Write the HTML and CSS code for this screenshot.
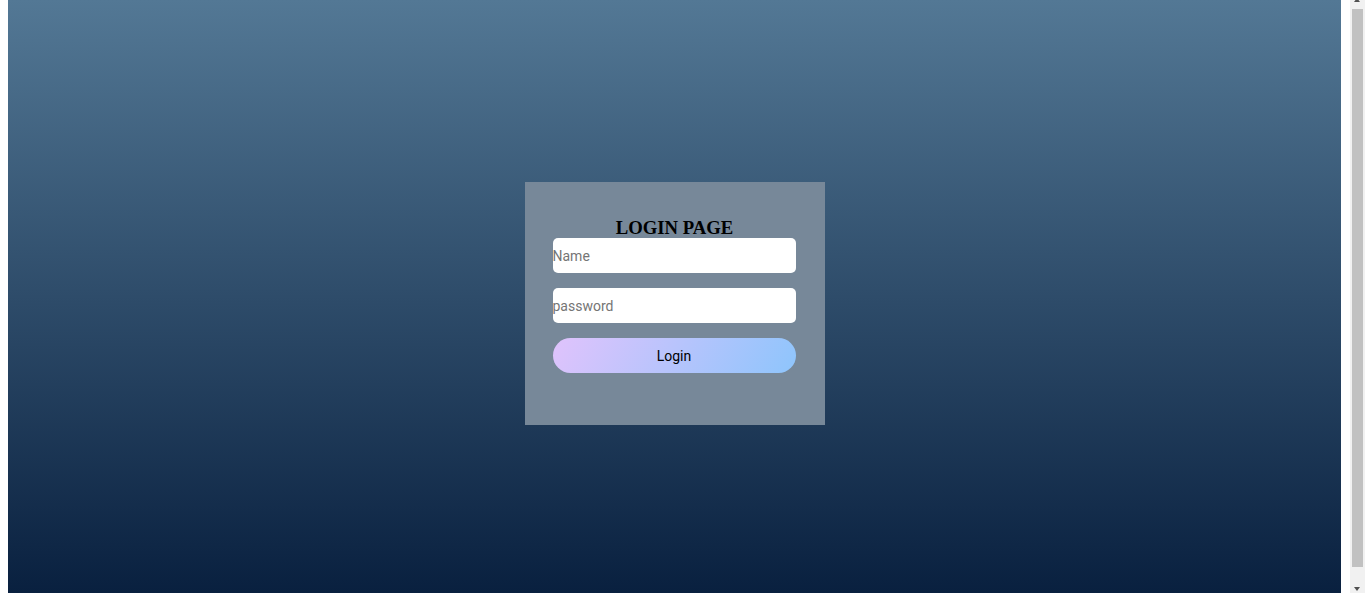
FILE: index.html
```html
<!DOCTYPE html>
<html lang="en">
<head>
<meta charset="utf-8">
<title>Login Page</title>
<link rel="stylesheet" href="styles.css">
</head>
<body>
<div class="page">
  <form class="card">
    <h3 class="title">LOGIN PAGE</h3>
    <input class="field" type="text" placeholder="Name">
    <input class="field" type="password" placeholder="password">
    <button class="btn" type="button">Login</button>
  </form>
</div>
<div class="scrollbar" aria-hidden="true">
  <span class="arrow-up"></span>
  <span class="thumb"></span>
  <span class="arrow-down"></span>
</div>
</body>
</html>
```
FILE: styles.css
```css
html, body {
  background: #ffffff;
}
body {
  margin: 0 24px 0 8px;
}
.page {
  height: 100vh;
  box-sizing: border-box;
  padding-top: 14px;
  background: linear-gradient(to top, #09203f 0%, #537895 100%);
  display: flex;
  align-items: center;
  justify-content: center;
}
.card {
  width: 300px;
  height: 243px;
  box-sizing: border-box;
  padding: 34.5px 28px 0 28px;
  background: #778899;
  display: flex;
  flex-direction: column;
  gap: 15px;
}
.title {
  margin: 0 0 -15px 0;
  font-family: "Liberation Serif", "Times New Roman", serif;
  font-size: 18.72px;
  font-weight: bold;
  line-height: 21.5px;
  text-align: center;
  color: #000;
}
.field {
  width: 243px;
  height: 35px;
  box-sizing: border-box;
  border: none;
  border-radius: 5px;
  padding: 0;
  background: #fff;
  font-family: Roboto, "Liberation Sans", sans-serif;
  font-size: 14px;
  color: #000;
  outline: none;
}
.field::placeholder {
  color: #757575;
}
.btn {
  width: 243px;
  height: 35px;
  border: none;
  border-radius: 18px;
  background: linear-gradient(120deg, #e0c3fc 0%, #8ec5fc 100%);
  font-family: Roboto, "Liberation Sans", sans-serif;
  font-size: 14px;
  color: #000;
  padding: 0;
}

/* imitation of the window's classic scrollbar */
.scrollbar {
  position: fixed;
  top: 0;
  right: 0;
  width: 15px;
  height: 100vh;
  background: #f1f1f1;
  overflow: hidden;
}
.thumb {
  position: absolute;
  top: 9px;
  left: 2px;
  width: 11px;
  height: 558px;
  background: #c1c1c1;
}
.arrow-up {
  position: absolute;
  top: -2px;
  left: 4px;
  width: 0;
  height: 0;
  border-left: 3.5px solid transparent;
  border-right: 3.5px solid transparent;
  border-bottom: 4px solid #505050;
}
.arrow-down {
  position: absolute;
  top: 587px;
  left: 4px;
  width: 0;
  height: 0;
  border-left: 3.5px solid transparent;
  border-right: 3.5px solid transparent;
  border-top: 4px solid #505050;
}
```
